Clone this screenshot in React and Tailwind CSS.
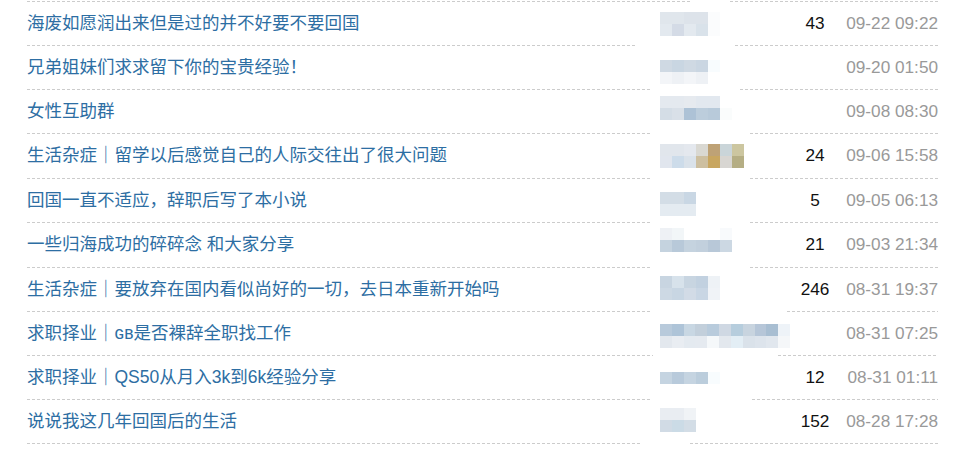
import React from 'react';

// dashed rule, 3px dash / 2px gap
const dash = 'h-px bg-[linear-gradient(to_right,#cccccc_3px,transparent_3px)] bg-[length:5px_1px]';

const topRule = ['w-[663px]', 'w-[40px]'];

const topics = [
  {
    title: '海废如愿润出来但是过的并不好要不要回国',
    count: '43',
    time: '09-22 09:22',
    h: 'h-[44px]',
    pt: 'pt-[10px]',
    rule: ['w-[610px]', 'w-[98px]'],
    mosaic: [
      ['#e0e6ec', '#e0e6ec', '#dde3ea', '#dde3ea', '#fbfcfd'],
      ['#e3e9ef', '#d4dbe6', '#e3e9ef', '#d9e2ea', '#fbfcfd'],
    ],
  },
  {
    title: '兄弟姐妹们求求留下你的宝贵经验！',
    count: '',
    time: '09-20 01:50',
    h: 'h-[44px]',
    pt: 'pt-[14px]',
    rule: ['w-[623px]', 'w-[90px]'],
    mosaic: [
      ['#cfd9e3', '#c9d6e2', '#cfd9e3', '#cad6e2', '#f8fcfe'],
      ['#f3f5f8', '#eef1f5', '#f3f5f8', '#eef1f5'],
    ],
  },
  {
    title: '女性互助群',
    count: '',
    time: '09-08 08:30',
    h: 'h-[44px]',
    pt: 'pt-[6px]',
    rule: ['w-[623px]', 'w-[100px]'],
    mosaic: [
      ['#e4e9ef', '#e4e9ef', '#e6eaef', '#e2e8ef', '#e2e8ef'],
      ['#d4dde6', '#d9e0e8', '#adc2d6', '#bccddc', '#b8cada', '#fafcfc'],
    ],
  },
  {
    title: '生活杂症｜留学以后感觉自己的人际交往出了很大问题',
    count: '24',
    time: '09-06 15:58',
    h: 'h-[45px]',
    pt: 'pt-[10px]',
    rule: ['w-[623px]', 'w-[100px]'],
    mosaic: [
      ['#e1e6ec', '#e1e6ec', '#e4e8ee', '#d9d8d2', '#bea276', '#cad5d9', '#ccc6a0'],
      ['#e1e6ee', '#cddcea', '#dae2ea', '#cdbfa0', '#c8a660', '#d8d6d2', '#b5ae84'],
    ],
  },
  {
    title: '回国一直不适应，辞职后写了本小说',
    count: '5',
    time: '09-05 06:13',
    h: 'h-[44px]',
    pt: 'pt-[13px]',
    rule: ['w-[623px]', 'w-[100px]'],
    mosaic: [
      ['#d3dde6', '#d3dde6', '#c9d7e4'],
      ['#e4ebf1', '#e4ebf1', '#e4ebf1'],
    ],
  },
  {
    title: '一些归海成功的碎碎念 和大家分享',
    count: '21',
    time: '09-03 21:34',
    h: 'h-[45px]',
    pt: 'pt-[5px]',
    rule: ['w-[623px]', 'w-[100px]'],
    mosaic: [
      ['#eef1f5', '#f2f6f8', '#ffffff', '#ffffff', '#ffffff', '#f8fafc'],
      ['#c5d3df', '#b8c9d9', '#c5d3df', '#c2d0dd', '#b8c8d8', '#ccd8e3'],
    ],
  },
  {
    title: '生活杂症｜要放弃在国内看似尚好的一切，去日本重新开始吗',
    count: '246',
    time: '08-31 19:37',
    h: 'h-[44px]',
    pt: 'pt-[8px]',
    rule: ['w-[623px]', 'w-[137px]'],
    mosaic: [
      ['#c8d5e1', '#d7e2eb', '#c8d5e1', '#c2d1e0', '#eef2f6'],
      ['#cdd9e4', '#c8d6e3', '#d2dbe6', '#c9d6e4', '#f0f3f7'],
    ],
  },
  {
    title: '求职择业｜ɢʙ是否裸辞全职找工作',
    count: '',
    time: '08-31 07:25',
    h: 'h-[44px]',
    pt: 'pt-[12px]',
    rule: ['w-[626px]', 'w-[125px]'],
    mosaic: [
      ['#b8cadb', '#aec4d8', '#c8d7e3', '#c2cfdb', '#b8cbdc', '#cfd8e3', '#b6cddd', '#c8d4df', '#b6c6d8', '#a8bed2', '#eef3f8'],
      ['#e3e8ee', '#e9edf2', '#e4eaf0', '#e5eaf0', '#f5f8fa', '#e3e8ee', '#e3eef5', '#dae2ea', '#dde4ec', '#e1e7ee', '#f5f7f9'],
    ],
  },
  {
    title: '求职择业｜QS50从月入3k到6k经验分享',
    count: '12',
    time: '08-31 01:11',
    h: 'h-[44px]',
    pt: 'pt-[16px]',
    rule: ['w-[623px]', 'w-[102px]'],
    mosaic: [['#c5d4e1', '#b8cadb', '#c5d4e1', '#bbcddc', '#f8fcfe']],
  },
  {
    title: '说说我这几年回国后的生活',
    count: '152',
    time: '08-28 17:28',
    h: 'h-[44px]',
    pt: 'pt-[8px]',
    rule: ['w-[613px]', 'w-[50px]'],
    mosaic: [
      ['#e9edf2', '#e9edf2', '#f0f3f6'],
      ['#d1dbe5', '#cbdbe6', '#d3dde6'],
    ],
  },
];

// bottom rule with the author column left blank
const Rule = ({ widths }) => (
  <div className="flex h-px">
    <div className={`${dash} ${widths[0]}`} />
    <div className={widths[1]} />
    <div className={`${dash} flex-1`} />
  </div>
);

const Mosaic = ({ rows }) => (
  <div className="flex flex-col">
    {rows.map((row, i) => (
      <div key={i} className="flex">
        {row.map((c, j) => (
          <div key={j} className="w-[12px] h-[12px]" style={{ backgroundColor: c }} />
        ))}
      </div>
    ))}
  </div>
);

const TopicRow = ({ topic }) => (
  <div className={`flex flex-col ${topic.h}`}>
    <div className="flex flex-1 items-center">
      <div className="w-[623px] whitespace-nowrap text-[17.5px] text-[#2d6ea3]">{topic.title}</div>
      <div className={`w-[140px] self-stretch pl-[10px] ${topic.pt}`}>
        <Mosaic rows={topic.mosaic} />
      </div>
      <div className="w-[50px] text-center text-[#111111]">{topic.count}</div>
      <div className="flex-1 text-right text-[#999999] whitespace-nowrap">{topic.time}</div>
    </div>
    <Rule widths={topic.rule} />
  </div>
);

export default function App() {
  return (
    <div className="w-[973px] h-[454px] overflow-hidden bg-white font-['Liberation_Sans','Noto_Sans_CJK_SC',sans-serif] text-[17.2px] leading-none">
      <div className="ml-[27px] w-[911px]">
        <div className="pt-px">
          <Rule widths={topRule} />
        </div>
        {topics.map((t) => (
          <TopicRow key={t.time} topic={t} />
        ))}
      </div>
    </div>
  );
}
